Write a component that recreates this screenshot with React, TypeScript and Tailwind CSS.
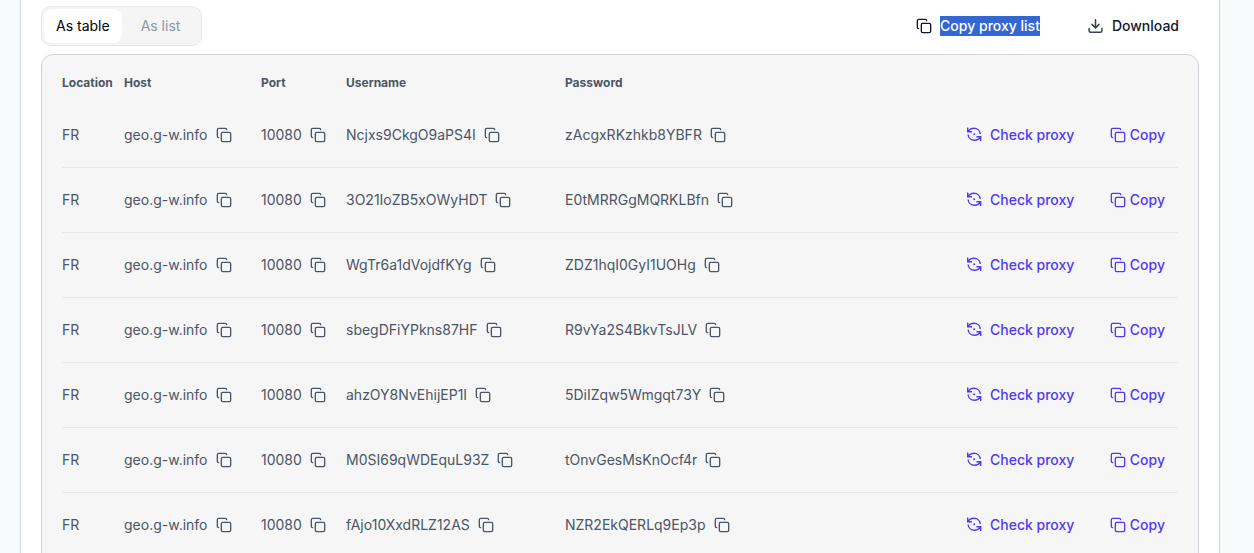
import React, { useState } from 'react';
import { Copy } from 'lucide-react';

interface Proxy {
  location: string;
  host: string;
  port: string;
  username: string;
  password: string;
}

const credentials = [
  ['Ncjxs9CkgO9aPS4I', 'zAcgxRKzhkb8YBFR'],
  ['3O21IoZB5xOWyHDT', 'E0tMRRGgMQRKLBfn'],
  ['WgTr6a1dVojdfKYg', 'ZDZ1hqI0GyI1UOHg'],
  ['sbegDFiYPkns87HF', 'R9vYa2S4BkvTsJLV'],
  ['ahzOY8NvEhijEP1I', '5DiIZqw5Wmgqt73Y'],
  ['M0SI69qWDEquL93Z', 'tOnvGesMsKnOcf4r'],
  ['fAjo10XxdRLZ12AS', 'NZR2EkQERLq9Ep3p'],
];

const proxies: Proxy[] = credentials.map(([username, password]) => ({
  location: 'FR',
  host: 'geo.g-w.info',
  port: '10080',
  username,
  password,
}));

const toLine = (p: Proxy) => `${p.host}:${p.port}:${p.username}:${p.password}`;

const copyText = (text: string) => {
  navigator.clipboard?.writeText(text);
};

const CheckIcon: React.FC = () => (
  <svg
    viewBox="0 0 16 16"
    className="h-4 w-4"
    fill="none"
    stroke="currentColor"
    strokeWidth="1.4"
    aria-hidden="true"
  >
    <path d="M1.7 0.5v4.2H6" />
    <path d="M1.9 4.6C3.1 2.6 5.2 1.3 8 1.3c3.4 0 6 2.5 6.2 5.7" />
    <path d="M14.7 13.9V9.7h-4.3" />
    <path d="M14.5 9.8c-1.2 2-3.3 3.4-6.1 3.4-3.5 0-6.1-2.5-6.3-5.7" />
    <circle cx="8.2" cy="7.2" r="1" fill="currentColor" stroke="none" />
  </svg>
);

const DownloadIcon: React.FC = () => (
  <svg
    viewBox="0 0 16 16"
    className="h-4 w-4 text-gray-700"
    fill="none"
    stroke="currentColor"
    strokeWidth="1.5"
    strokeLinecap="round"
    strokeLinejoin="round"
    aria-hidden="true"
  >
    <path d="M7.5 1.7v8.1" />
    <path d="M4 6.4l3.5 3.5L11 6.4" />
    <path d="M1.1 10.6v2.2c0 .9.6 1.5 1.5 1.5h9.8c.9 0 1.5-.6 1.5-1.5v-2.2" />
  </svg>
);

const CopyValue: React.FC<{ value: string; label: string }> = ({ value, label }) => (
  <div className="flex items-center gap-2">
    <span>{value}</span>
    <button type="button" aria-label={`Copy ${label}`} onClick={() => copyText(value)}>
      <Copy className="h-4 w-4" aria-hidden="true" />
    </button>
  </div>
);

const ProxyTable: React.FC = () => (
  <table className="w-full table-fixed border-separate border-spacing-0 text-left text-sm text-gray-600">
    <colgroup>
      <col className="w-[62px]" />
      <col className="w-[137px]" />
      <col className="w-[85px]" />
      <col className="w-[219px]" />
      <col />
      <col className="w-[212px]" />
    </colgroup>
    <thead>
      <tr className="h-10 text-xs">
        <th>Location</th>
        <th>Host</th>
        <th>Port</th>
        <th>Username</th>
        <th>Password</th>
        <th aria-label="Actions" />
      </tr>
    </thead>
    <tbody>
      {proxies.map((p) => (
        <tr key={p.username} className="h-[65px] *:border-b *:border-[#e8e8e8]">
          <td>{p.location}</td>
          <td>
            <CopyValue value={p.host} label="host" />
          </td>
          <td>
            <CopyValue value={p.port} label="port" />
          </td>
          <td>
            <CopyValue value={p.username} label="username" />
          </td>
          <td>
            <CopyValue value={p.password} label="password" />
          </td>
          <td>
            <div className="flex items-center justify-between pr-[13px] font-medium text-[#4f39f6]">
              <button type="button" className="flex items-center gap-2">
                <CheckIcon />
                Check proxy
              </button>
              <button
                type="button"
                className="flex items-center gap-1"
                onClick={() => copyText(toLine(p))}
              >
                <Copy className="h-4 w-4" aria-hidden="true" />
                Copy
              </button>
            </div>
          </td>
        </tr>
      ))}
    </tbody>
  </table>
);

export default function App() {
  const [view, setView] = useState<'table' | 'list'>('table');

  const tabColor = (active: boolean) =>
    active ? 'bg-white text-black' : 'text-[#8b95a5]';

  return (
    <main className="h-screen overflow-hidden bg-[#f8fafc] pr-[34px] pl-5 font-['Inter',sans-serif] text-sm">
      <section className="border-x border-[#d1d5dc] bg-white px-5 pt-1.5 pb-5">
        {/* Toolbar */}
        <div className="flex items-center justify-between">
          <div className="flex h-10 rounded-[10px] border border-[#e8e8e8] bg-[#f5f5f5] p-0.5">
            <button
              type="button"
              className={`rounded-lg px-3 ${tabColor(view === 'table')}`}
              onClick={() => setView('table')}
            >
              As table
            </button>
            <button
              type="button"
              className={`rounded-lg px-[19px] ${tabColor(view === 'list')}`}
              onClick={() => setView('list')}
            >
              As list
            </button>
          </div>
          <div className="flex items-center gap-12 pr-5 font-medium text-gray-900">
            <button
              type="button"
              className="flex items-center gap-2"
              onClick={() => copyText(proxies.map(toLine).join('\n'))}
            >
              <Copy className="h-4 w-4" aria-hidden="true" />
              <span className="bg-[#3367d1] text-white">Copy proxy list</span>
            </button>
            <button type="button" className="flex items-center gap-2">
              <DownloadIcon />
              Download
            </button>
          </div>
        </div>

        {/* Proxies */}
        <div className="mt-2 rounded-xl border border-[#d1d5dc] bg-[#f6f6f6] px-5 pt-2 pb-5">
          {view === 'table' ? (
            <ProxyTable />
          ) : (
            <ul className="py-3 leading-7 text-gray-600">
              {proxies.map((p) => (
                <li key={p.username}>{toLine(p)}</li>
              ))}
            </ul>
          )}
        </div>
      </section>
    </main>
  );
}
